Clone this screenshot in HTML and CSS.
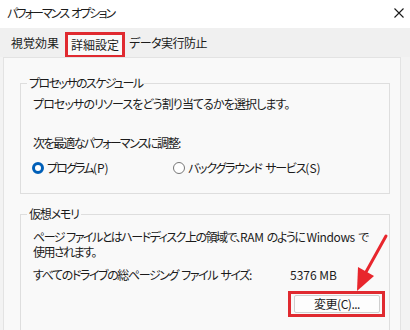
FILE: index.html
```html
<!DOCTYPE html>
<html lang="ja">
<head>
<meta charset="utf-8">
<link rel="stylesheet" href="styles.css">
</head>
<body>
<div class="window">
  <div class="titlebar">
    <span class="title">パフォーマンス オプション</span>
    <svg class="close" width="10" height="10" viewBox="0 0 10 10"><path d="M0.5 0.5 L9.5 9.5 M9.5 0.5 L0.5 9.5" stroke="#1a1a1a" stroke-width="1.1" fill="none"/></svg>
  </div>
  <div class="tabs">
    <div class="tab t1">視覚効果</div>
    <div class="tab active">詳細設定</div>
    <div class="tab t3">データ実行防止</div>
  </div>
  <div class="panel">
    <fieldset class="group g1">
      <legend class="lg1">プロセッサのスケジュール</legend>
      <p class="line l1">プロセッサのリソースをどう割り当てるかを選択します。</p>
      <p class="line adjust">次を最適なパフォーマンスに調整:</p>
      <div class="radios">
        <label class="radio r1"><span class="dot checked"></span><span class="rt1">プログラム<span class="lat">(P)</span></span></label>
        <label class="radio r2"><span class="dot"></span><span class="rt2">バックグラウンド サービス<span class="lat">(S)</span></span></label>
      </div>
    </fieldset>
    <fieldset class="group g2">
      <legend class="lg2">仮想メモリ</legend>
      <p class="para">ページ ファイルとはハードディスク上の領域で、<span class="plat">RAM </span>のように <span class="plat">Windows </span>で<br>使用されます。</p>
      <div class="sizerow"><span class="sizelabel">すべてのドライブの総ページング ファイル サイズ:</span><span class="sizeval">5376 MB</span></div>
      <div class="btnrow"><div class="hl"><button class="btn">変更(C)...</button></div></div>
    </fieldset>
  </div>
  <svg class="arrow" width="410" height="330" viewBox="0 0 410 330">
    <line x1="386" y1="236" x2="366" y2="272" stroke="#e8262d" stroke-width="3" stroke-linecap="round"/>
    <polygon points="357,291 358,267 374,276" fill="#e8262d"/>
  </svg>
</div>
</body>
</html>
```
FILE: styles.css
```css
* { box-sizing: border-box; }
html, body { margin: 0; padding: 0; }
body {
  width: 410px;
  height: 330px;
  overflow: hidden;
  font-family: "Noto Sans CJK JP", "Noto Sans", sans-serif;
  font-size: 12px;
  color: #1b1b1b;
  background: #f3f3f3;
  font-feature-settings: "palt";
}
.window { position: relative; width: 410px; height: 330px; }
.titlebar {
  height: 28px;
  background: #ffffff;
  display: flex;
  align-items: center;
  justify-content: space-between;
  padding: 0 6px 2px 7px;
}
.title { line-height: 16px; letter-spacing: -1.9px; word-spacing: 2px; }
.tabs {
  height: 29px;
  background: #f0f0f0;
  display: flex;
  align-items: flex-end;
  padding-left: 5px;
}
.tab {
  height: 25px;
  line-height: 21px;
  padding: 0 6px;
  white-space: nowrap;
}
.tab.active {
  border: 3px solid #e02a30;
  border-bottom-width: 2px;
  background: #f9f9f9;
  padding: 0 3px;
  line-height: 19px;
}
.tab.t3 { padding: 0 3px 0 4px; letter-spacing: -0.5px; }
.panel {
  margin: 0 9px 0 3px;
  height: 273px;
  background: #f9f9f9;
  border: 1px solid #e3e3e3;
  border-bottom: none;
  padding: 17px 10px 0 16px;
}
.group {
  margin: 0;
  border: 1px solid #dedede;
  padding: 5px 12px 17px 12px;
  min-width: 0;
}
legend {
  padding: 0 2px;
  margin-left: -6px;
  line-height: 16px;
}
.lg1 { letter-spacing: -1.6px; }
.lg2 { letter-spacing: -1.2px; }
p { margin: 0; }
.line, .para, .sizerow, .radio { white-space: nowrap; }
.line { line-height: 16px; }
.l1 { letter-spacing: -0.9px; }
.adjust { margin-top: 23px; letter-spacing: -1.6px; }
.radios {
  display: flex;
  margin-top: 9px;
  line-height: 16px;
}
.radio { display: flex; align-items: center; }
.r1 { margin-left: -1px; width: 141px; }
.rt1 { letter-spacing: -1.8px; }
.rt2 { letter-spacing: -1.2px; word-spacing: 2px; }
.lat { letter-spacing: 0; }
.dot {
  width: 12px;
  height: 12px;
  border-radius: 50%;
  border: 1px solid #777;
  margin-right: 3px;
  background: #fff;
}
.dot.checked {
  border: 3.5px solid #005fb8;
  background: #fff;
}
.g2 { margin-top: 12px; padding-top: 7px; padding-bottom: 20px; }
.para { line-height: 15px; letter-spacing: -1.5px; word-spacing: 1px; }
.plat { letter-spacing: -0.4px; }
.sizerow { display: flex; margin-top: 8px; line-height: 16px; }
.sizelabel { width: 257px; letter-spacing: -1.4px; word-spacing: 2px; }
.btnrow { display: flex; justify-content: flex-end; margin-top: 8px; margin-right: -8px; }
.hl {
  border: 3px solid #e02a30;
  padding: 1px 2px 1px 3px;
}
.btn {
  width: 86px;
  height: 18px;
  font: inherit;
  font-size: 12px;
  line-height: 14px;
  padding: 0;
  background: #fdfdfd;
  border: 1px solid #cfcfcf;
  border-radius: 2px;
  color: #1b1b1b;
  letter-spacing: -0.5px;
}
.arrow { position: absolute; left: 0; top: 0; pointer-events: none; }
```
